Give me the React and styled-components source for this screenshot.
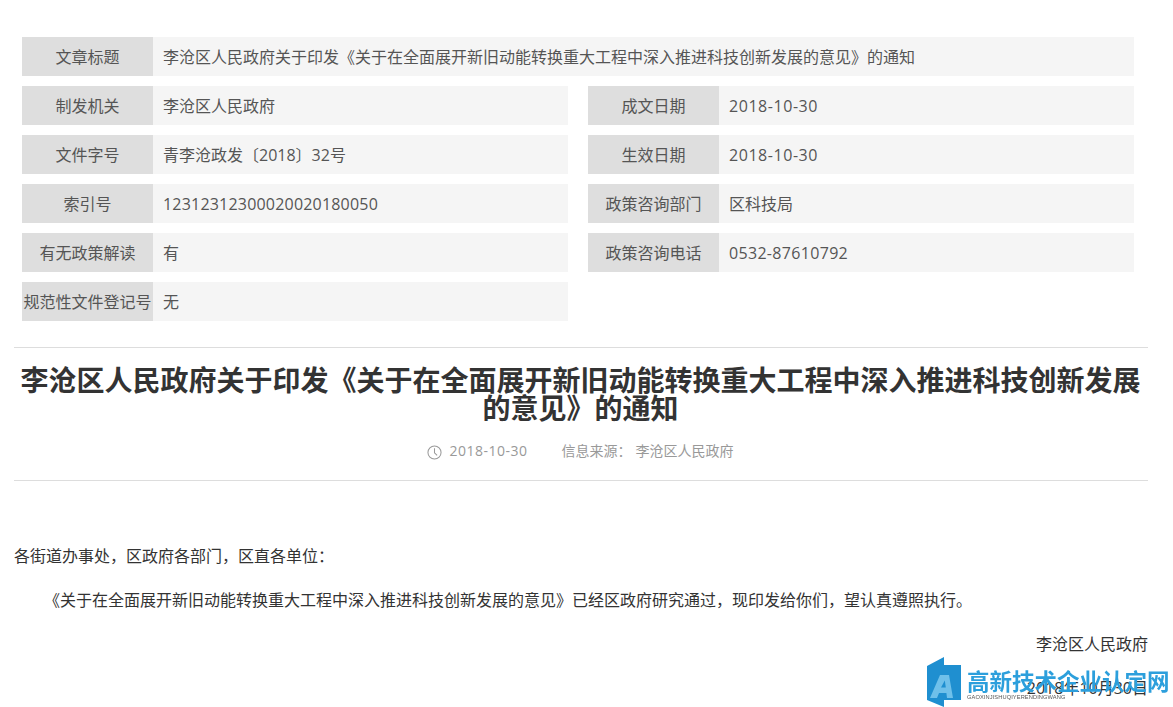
import React from "react";
import styled, { createGlobalStyle } from "styled-components";

const Global = createGlobalStyle`
  html, body { margin: 0; padding: 0; background: #fff; overflow: hidden; }
  body { font-family: "Liberation Sans", "Noto Sans CJK SC", sans-serif; color: #333; }
`;
const Page = styled.div`
  height: 707px; box-sizing: border-box; overflow: hidden; padding: 37px 25px 0 14px;
`;
const Meta = styled.div`
  display: grid; grid-template-columns: 546px 546px; column-gap: 20px; row-gap: 10px; padding: 0 0 26px 8px;
`;
const Cell = styled.div`
  display: flex; height: 39px; background: #f5f5f5; grid-column: ${p => (p.$wide ? "1 / 3" : "auto")};
`;
const Label = styled.div`
  flex: 0 0 131px; background: #dedede; display: flex; align-items: center; justify-content: center;
  font: 16px/37px "Noto Sans CJK SC", sans-serif; color: #555; white-space: nowrap; padding-bottom: 1px; box-sizing: border-box;
`;
const Value = styled.div`
  padding: 1px 0 0 10px; font: 16px/38px "Open Sans", "Noto Sans CJK SC", sans-serif; color: #555; white-space: nowrap;
  letter-spacing: ${p => p.$ls || "0"};
`;
const Header = styled.div`
  border-top: 1px solid #ddd; border-bottom: 1px solid #ddd; padding: 17px 1px 15px 0; text-align: center;
`;
const Title = styled.h1`
  margin: 0; font: 700 28px/28px "Noto Sans CJK SC", sans-serif; color: #333;
`;
const Info = styled.div`
  display: flex; justify-content: center; align-items: center; margin-top: 16px; height: 28px;
  font: 14px/28px "Noto Sans CJK SC", sans-serif; color: #999;
`;
const Clock = styled.svg`
  width: 15px; height: 15px; margin-right: 7px; margin-top: 2px;
`;
const DateText = styled.span`
  font: 14px/28px "Open Sans", sans-serif; letter-spacing: 0.5px; margin-right: 34px;
`;
const Source = styled.span`
  margin-right: 4px; padding-bottom: 2px;
  &:last-child { margin-right: 0; }
`;
const Body = styled.div`
  font: 16px/44px "Open Sans", "Noto Sans CJK SC", sans-serif; color: #333; padding-top: 53px;
`;
const Para = styled.p`
  margin: 0; text-indent: ${p => (p.$indent ? "30px" : "0")}; text-align: ${p => (p.$right ? "right" : "left")}; white-space: nowrap;
`;
const Mark = styled.div`
  position: fixed; left: 927px; top: 657px; width: 246px; height: 50px; display: flex; align-items: flex-start;
`;
const MarkText = styled.div`
  margin: 11px 0 0 6px; display: flex; flex-direction: column;
`;
const MarkCn = styled.div`
  font: 700 22.5px/25px "Noto Sans CJK SC", sans-serif; color: #2c9fdc; white-space: nowrap;
`;
const MarkEn = styled.div`
  font: 5.7px/7px "Liberation Sans", sans-serif; color: #555; white-space: nowrap; letter-spacing: 0.1px; margin-top: 1px;
`;

const rows = [
  ["制发机关", "李沧区人民政府", "", "成文日期", "2018-10-30", "0.55px"],
  ["文件字号", "青李沧政发〔2018〕32号", "", "生效日期", "2018-10-30", "0.55px"],
  ["索引号", "12312312300020020180050", "0.2px", "政策咨询部门", "区科技局", ""],
  ["有无政策解读", "有", "", "政策咨询电话", "0532-87610792", "0.32px"],
  ["规范性文件登记号", "无", ""],
];

export default function App() {
  return (
    <Page>
      <Global />
      <Meta>
        <Cell $wide>
          <Label>文章标题</Label>
          <Value>李沧区人民政府关于印发《关于在全面展开新旧动能转换重大工程中深入推进科技创新发展的意见》的通知</Value>
        </Cell>
        {rows.flatMap(r => {
          const out = [
            <Cell key={r[0]}><Label>{r[0]}</Label><Value $ls={r[2]}>{r[1]}</Value></Cell>,
          ];
          if (r[3]) out.push(<Cell key={r[3]}><Label>{r[3]}</Label><Value $ls={r[5]}>{r[4]}</Value></Cell>);
          return out;
        })}
      </Meta>
      <Header>
        <Title>李沧区人民政府关于印发《关于在全面展开新旧动能转换重大工程中深入推进科技创新发展的意见》的通知</Title>
        <Info>
          <Clock viewBox="0 0 16 16" fill="none" stroke="#999" strokeWidth="1.1">
            <circle cx="8" cy="8" r="7" />
            <path d="M8 3.5V8.3L10.8 11" />
          </Clock>
          <DateText>2018-10-30</DateText>
          <Source>{"信息来源\uFF1A"}</Source>
          <Source>李沧区人民政府</Source>
        </Info>
      </Header>
      <Body>
        <Para>{"各街道办事处\uFF0C区政府各部门\uFF0C区直各单位\uFF1A"}</Para>
        <Para $indent>{"《关于在全面展开新旧动能转换重大工程中深入推进科技创新发展的意见》已经区政府研究通过\uFF0C现印发给你们\uFF0C望认真遵照执行。"}</Para>
        <Para $right>李沧区人民政府</Para>
        <Para $right>2018年10月30日</Para>
      </Body>
      <Mark>
        <svg width="34" height="50" viewBox="0 0 34 50">
          <path d="M0 9 L17 0 V8 H34 V43 H17 V50 L0 43 Z" fill="#1f8fd0" />
          <path d="M3 41 L13 18 H22 L26 41 H20 L19.4 36 H12 L10 41 Z M14 30.5 H18.8 L17.8 23.5 Z" fill="#6fc0ea" fillRule="evenodd" />
        </svg>
        <MarkText>
          <MarkCn>高新技术企业认定网</MarkCn>
          <MarkEn>GAOXINJISHUQIYERENDINGWANG</MarkEn>
        </MarkText>
      </Mark>
    </Page>
  );
}
